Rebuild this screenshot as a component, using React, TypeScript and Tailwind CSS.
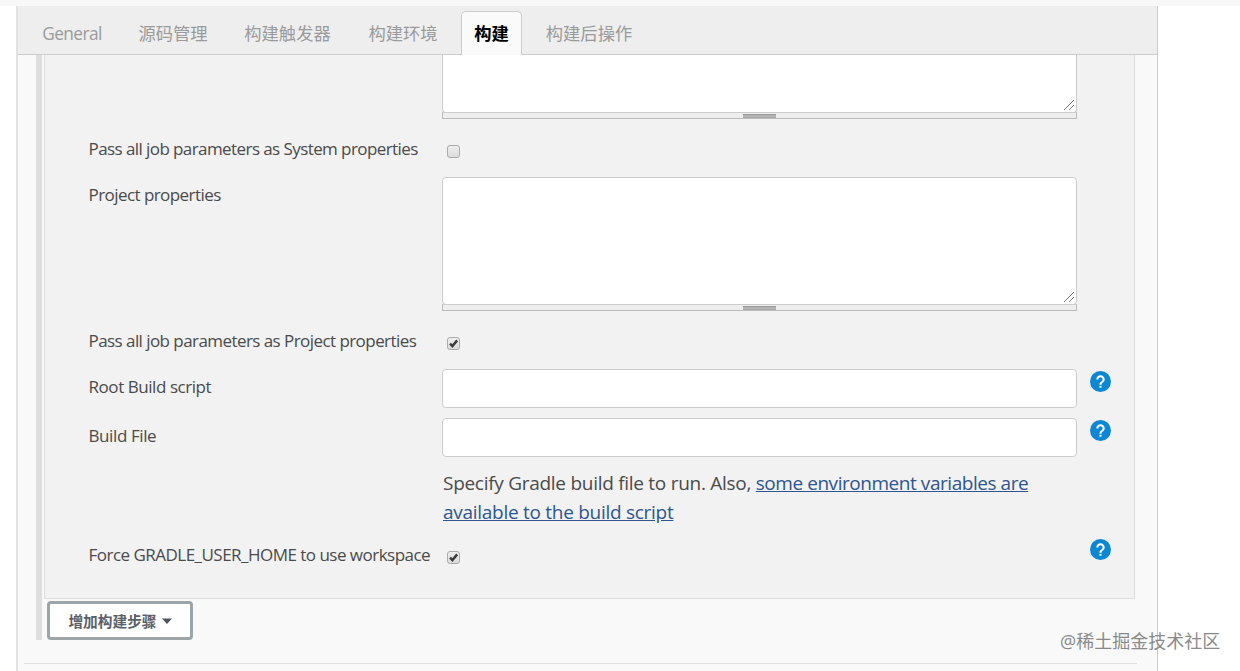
import type { ReactNode } from 'react';
import clsx from 'clsx';

const tabs = [
    { label: 'General', width: 'w-[96px] tracking-[-0.6px]' },
    { label: '源码管理', width: 'w-[106px]' },
    { label: '构建触发器', width: 'w-[123px]' },
    { label: '构建环境', width: 'w-[108px] mr-[4px]' },
    { label: '构建', width: 'w-[61px]', active: true },
    { label: '构建后操作', width: 'w-[134px]' },
];

const Tab = ({ label, width, active }: { label: string; width: string; active?: boolean }) => (
    <button
        className={clsx(
            'flex shrink-0 items-center justify-center whitespace-nowrap text-[17.3px]',
            width,
            active
                ? 'h-[44px] rounded-t-[5px] border border-b-0 border-[#ccc] bg-[#fafafa] font-bold text-black'
                : 'mb-px h-[43px] pt-[2px] text-[#9a9a9a]'
        )}
    >
        {label}
    </button>
);

type RowProps = { label?: string; height: string; tracking?: string; help?: boolean; children: ReactNode };

const Row = ({ label, height, tracking, help, children }: RowProps) => (
    <div className={clsx('flex items-start', height)}>
        <div className={clsx('w-[354px] shrink-0 whitespace-nowrap pl-[0.5px] pt-[5.5px] leading-6', tracking)}>{label}</div>
        <div className="w-[635px] shrink-0">{children}</div>
        {help && <HelpIcon />}
    </div>
);

const HelpIcon = () => (
    <svg viewBox="2 2 20 20" className="ml-[13px] mt-[1.5px] size-[21px]">
        <circle cx="12" cy="12" r="10" fill="#0d87d4" />
        <path
            fill="#fff"
            d="M11 18h2v-2h-2v2zm1-12c-2.21 0-4 1.79-4 4h2c0-1.1.9-2 2-2s2 .9 2 2c0 2-3 1.75-3 5h2c0-2.25 3-2.5 3-5 0-2.21-1.79-4-4-4z"
        />
    </svg>
);

const TextArea = ({ open }: { open?: boolean }) => (
    <div>
        <div
            className={clsx(
                'flex items-end justify-end border border-[#ccc] bg-white',
                open ? 'h-[58px] rounded-b-[4px] border-t-0' : 'h-[128px] rounded-[4px]'
            )}
        >
            <svg viewBox="0 0 12 12" className="mb-px mr-px size-[12px]" stroke="#777" strokeWidth="1">
                <path d="M1 11L11 1M6 11L11 6" />
            </svg>
        </div>
        <div className="-mt-px flex h-[7px] items-end justify-center border border-[#bbb] border-t-[#ccc] bg-[#eee]">
            <div className="h-[4px] w-[33px] border-y border-[#999] border-b-[#aaa] bg-[#b4b4b4]" />
        </div>
    </div>
);

const CheckBox = ({ checked }: { checked?: boolean }) => (
    <div className="ml-[5px] mt-[14px] size-[13px] rounded-[3px] border border-[#aaa] bg-linear-to-b from-[#eee] to-[#dcdcdc]">
        {checked && (
            <svg viewBox="0 0 12 12" className="size-[11px]" fill="none" stroke="#3c3c3c" strokeWidth="2.7">
                <path d="M2.2 6.2L4.8 8.8L10 2.6" />
            </svg>
        )}
    </div>
);

const TextInput = () => <div className="h-[39px] rounded-[4px] border border-[#ccc] bg-white" />;

export default function App() {
    return (
        <div className="relative flex h-[671px] w-[1240px] flex-col overflow-hidden bg-white font-['Open_Sans','Noto_Sans_CJK_SC',sans-serif] text-[17px] text-[#4a4a4a]">
            <div className="h-[6px] shrink-0 bg-[#f8f8f8]" />
            <div className="ml-[16px] flex w-[1142px] grow flex-col border-l-2 border-r border-l-[#e2e2e2] border-r-[#ccc] bg-[#f9f9f9]">
                <div className="flex h-[49px] shrink-0 items-end border-b border-[#ccc] bg-[#eee] pl-[6px]">
                    <div className="-mb-px flex items-end">
                        {tabs.map((tab) => (
                            <Tab key={tab.label} {...tab} />
                        ))}
                    </div>
                </div>
                <div className="ml-[18px] flex h-[585px] shrink-0 border-l-[6px] border-[#dedede]">
                    <div className="ml-[2px] flex flex-col items-start">
                        <div className="flex h-[544px] w-[1091px] flex-col border border-t-0 border-[#ddd] bg-[#f2f2f2] pl-[43px]">
                            <Row height="h-[76px]">
                                <TextArea open />
                            </Row>
                            <Row label="Pass all job parameters as System properties" height="h-[46px]" tracking="tracking-[-0.58px]">
                                <CheckBox />
                            </Row>
                            <Row label="Project properties" height="h-[146px]" tracking="tracking-[-0.56px]">
                                <TextArea />
                            </Row>
                            <Row label="Pass all job parameters as Project properties" height="h-[46px]" tracking="tracking-[-0.56px]">
                                <CheckBox checked />
                            </Row>
                            <Row label="Root Build script" height="h-[49px]" tracking="tracking-[-0.44px]" help>
                                <TextInput />
                            </Row>
                            <Row label="Build File" height="h-[51px]" tracking="tracking-[-0.4px]" help>
                                <TextInput />
                            </Row>
                            <Row height="h-[68px]">
                                <p className="-mt-px pl-px pt-px text-[19px] leading-[29px] tracking-[-0.28px]">
                                    Specify Gradle build file to run. Also,{' '}
                                    <a className="tracking-[-0.45px] text-[#2f5590] underline">
                                        some environment variables are
                                    </a>
                                    <br />
                                    <a className="text-[#2f5590] underline">available to the build script</a>
                                </p>
                            </Row>
                            <Row label="Force GRADLE_USER_HOME to use workspace" height="h-[46px]" tracking="tracking-[-0.52px]" help>
                                <CheckBox checked />
                            </Row>
                        </div>
                        <button className="ml-[3px] mt-[2px] flex h-[39px] w-[146px] items-center justify-center rounded-[4px] border-[3px] border-[#9da5a8] bg-white pt-px text-[14.7px] font-bold text-[#5a6068]">
                            增加构建步骤
                            <svg viewBox="0 0 10 6" className="ml-[5px] h-[6px] w-[10px]" fill="#4d545d">
                                <path d="M0 0.5H10L5 6Z" />
                            </svg>
                        </button>
                    </div>
                </div>
                <div className="ml-[6px] mt-[23px] w-[1113px] border-t border-[#e2e2e2]" />
            </div>
            <div className="absolute left-[1060px] top-[629px] whitespace-nowrap text-[18px] leading-6 text-[#8a8a8a]">
                @稀土掘金技术社区
            </div>
        </div>
    );
}
